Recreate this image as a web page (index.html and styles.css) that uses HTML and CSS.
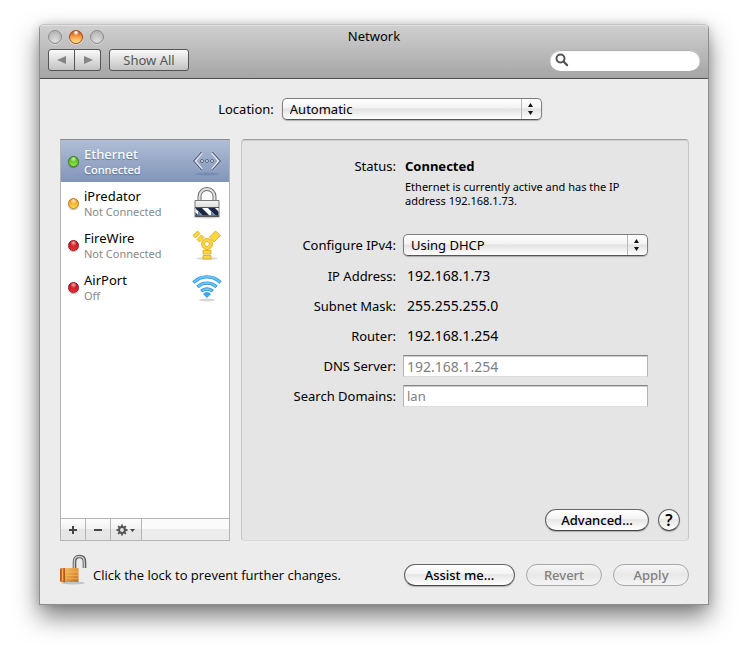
FILE: index.html
```html
<!DOCTYPE html>
<html lang="en">
<head>
<meta charset="utf-8">
<title>Network</title>
<link rel="stylesheet" href="styles.css">
</head>
<body>
<main class="window">
  <header class="titlebar">
    <div class="title-row">
      <div class="lights">
        <button class="light" aria-label="Close"></button>
        <button class="light light-amber" aria-label="Minimize"></button>
        <button class="light" aria-label="Zoom"></button>
      </div>
      <h1 class="title">Network</h1>
    </div>
    <div class="tool-row">
      <div class="nav">
        <button class="nav-btn" aria-label="Back"><svg width="10" height="10" viewBox="0 0 10 10"><path d="M9 1v8L0 5z" fill="#858585"/></svg></button>
        <button class="nav-btn" aria-label="Forward"><svg width="10" height="10" viewBox="0 0 10 10"><path d="M1 1v8l9-4z" fill="#858585"/></svg></button>
      </div>
      <button class="show-all">Show All</button>
      <div class="search">
        <svg width="14" height="14" viewBox="0 0 14 14"><circle cx="5.5" cy="5.5" r="4" fill="none" stroke="#555" stroke-width="2"/><path d="M8.500 8.500l3.600 3.600" stroke="#555" stroke-width="2.200" stroke-linecap="round"/></svg>
        <input type="search" aria-label="Search">
      </div>
    </div>
  </header>

  <div class="content">
    <div class="location">
      <label for="location">Location:</label>
      <span class="popup popup-location">
        <select id="location"><option>Automatic</option></select>
        <svg class="arrows" width="20" height="20" viewBox="0 0 20 20"><path d="M.5 0v20" stroke="#bbb"/><path d="M7 8l2.500-4L12 8zM7 12h5l-2.500 4z" fill="#111"/></svg>
      </span>
    </div>

    <div class="columns">
      <section class="sidebar">
        <ul class="services">
          <li class="service selected">
            <span class="dot green"></span>
            <span class="names"><span class="name">Ethernet</span><span class="state">Connected</span></span>
            <svg class="icon" width="32" height="32" viewBox="0 0 32 32">
              <ellipse cx="16" cy="29" rx="12" ry="1.500" fill="#63779f" opacity=".45"/>
              <g fill="none" stroke="#e5eaf2" stroke-width="3"><path d="M10.500 7.500L3.500 16l7 8.500M21.500 7.500l7 8.500-7 8.500"/></g>
              <g fill="none" stroke="#56647d" stroke-width="1.300"><path d="M10.500 7L2.500 16l8 9M21.500 7l8 9-8 9"/></g>
              <g fill="#dce3ee" stroke="#56647d"><circle cx="11" cy="16" r="1.500"/><circle cx="16" cy="16" r="1.500"/><circle cx="21" cy="16" r="1.500"/></g>
            </svg>
          </li>
          <li class="service">
            <span class="dot amber"></span>
            <span class="names"><span class="name">iPredator</span><span class="state">Not Connected</span></span>
            <svg class="icon" width="32" height="32" viewBox="0 0 32 32">
              <defs>
                <linearGradient id="steel" x2="0" y2="1"><stop offset="0" stop-color="#f5f5f5"/><stop offset="1" stop-color="#bbb"/></linearGradient>
                <clipPath id="band"><path d="M4.500 20.500h23v8h-23z"/></clipPath>
              </defs>
              <ellipse cx="16" cy="30" rx="14" ry="1.500" fill="#888" opacity=".4"/>
              <path d="M8.500 14V9.500a7.500 7.500 0 0 1 15 0V14" fill="none" stroke="#707070" stroke-width="4"/>
              <path d="M8.500 14V9.500a7.500 7.500 0 0 1 15 0V14" fill="none" stroke="#e0e0e0" stroke-width="2"/>
              <path d="M4 13.500h24v16H4z" fill="url(#steel)" stroke="#777"/>
              <g clip-path="url(#band)"><path d="M4 20h24v9H4z" fill="#fff"/><path d="M3 20h7l9 9h-7zM16 20h7l9 9h-7zM-8 20h7l9 9H1z" fill="#1b2744"/><path d="M7 24l4 5H7zM20 24l4 5h-4z" fill="#5c7fc4"/></g>
              <path d="M4 20.500h24" stroke="#555"/><path d="M4 29h24" stroke="#333"/>
            </svg>
          </li>
          <li class="service">
            <span class="dot red"></span>
            <span class="names"><span class="name">FireWire</span><span class="state">Not Connected</span></span>
            <svg class="icon" width="32" height="32" viewBox="0 0 32 32">
              <ellipse cx="16" cy="29.500" rx="11" ry="1.500" fill="#999" opacity=".35"/>
              <g fill="#fbd93c" stroke="#d9a514" stroke-width=".8">
                <path d="M18.500 8l6-6 5 4.500-6.500 6.500zM2 6.500L6.500 2l2.500 2.500L4.500 9zM6 10.500L10.500 6l2.500 2.500L8.500 13zM12 21.500h8v3.500h-8zM12 26.500h8V30h-8z"/>
                <path fill-rule="evenodd" d="M16 9.500a5.500 5.500 0 1 0 0 11 5.500 5.500 0 0 0 0-11zm0 3a2.500 2.500 0 1 1 0 5 2.500 2.500 0 0 1 0-5z"/>
              </g>
            </svg>
          </li>
          <li class="service">
            <span class="dot red"></span>
            <span class="names"><span class="name">AirPort</span><span class="state">Off</span></span>
            <svg class="icon" width="32" height="32" viewBox="0 0 32 32">
              <ellipse cx="16" cy="29" rx="8" ry="1.500" fill="#999" opacity=".4"/>
              <g fill="none" stroke="#2790d8" stroke-width="3.400"><path d="M2.500 11.500a19 19 0 0 1 27 0M6.500 16a13.500 13.500 0 0 1 19 0M10.300 20.300a8.300 8.300 0 0 1 11.400 0"/></g>
              <g fill="none" stroke="#67c4fa" stroke-width="2"><path d="M3 11.200a18.500 18.500 0 0 1 26 0M7 15.700a13 13 0 0 1 18 0M11 20a7.500 7.500 0 0 1 10 0"/></g>
              <path d="M12.500 23a5 5 0 0 1 7 0L16 26.500z" fill="#41a9ea" stroke="#2790d8" stroke-width=".8"/>
            </svg>
          </li>
        </ul>
        <div class="list-tools">
          <button class="tool" aria-label="Add"><svg width="10" height="10" viewBox="0 0 10 10"><path d="M5 1v8M1 5h8" stroke="#444" stroke-width="2"/></svg></button>
          <button class="tool" aria-label="Remove"><svg width="10" height="10" viewBox="0 0 10 10"><path d="M1 5h8" stroke="#444" stroke-width="2"/></svg></button>
          <button class="tool tool-wide" aria-label="Actions"><svg width="20" height="12" viewBox="0 0 20 12"><circle cx="6" cy="6" r="2.900" fill="none" stroke="#555" stroke-width="2"/><g stroke="#555" stroke-width="1.800"><path d="M6 .5v2.500M6 9v2.500M.5 6H3M9 6h2.500M2.100 2.100l1.800 1.800M8.100 8.100l1.800 1.800M2.100 9.900l1.800-1.800M8.100 3.900l1.800-1.800"/></g><path d="M14 5h5l-2.500 3z" fill="#444"/></svg></button>
        </div>
      </section>

      <section class="panel">
        <div class="form">
          <span class="label">Status:</span>
          <div class="status"><strong>Connected</strong><p>Ethernet is currently active and has the IP<br>address 192.168.1.73.</p></div>
          <label class="label" for="ipv4">Configure IPv4:</label>
          <span class="popup"><select id="ipv4"><option>Using DHCP</option></select><svg class="arrows" width="20" height="20" viewBox="0 0 20 20"><path d="M.5 0v20" stroke="#bbb"/><path d="M7 8l2.500-4L12 8zM7 12h5l-2.500 4z" fill="#111"/></svg></span>
          <span class="label">IP Address:</span><span class="value">192.168.1.73</span>
          <span class="label">Subnet Mask:</span><span class="value">255.255.255.0</span>
          <span class="label">Router:</span><span class="value">192.168.1.254</span>
          <label class="label" for="dns">DNS Server:</label><input class="field field-ip" id="dns" type="text" placeholder="192.168.1.254">
          <label class="label" for="domains">Search Domains:</label><input class="field" id="domains" type="text" placeholder="lan">
        </div>
        <div class="panel-actions">
          <button class="pill">Advanced...</button>
          <button class="help" aria-label="Help">?</button>
        </div>
      </section>
    </div>

    <footer class="footer">
      <button class="lock">
        <svg width="28" height="32" viewBox="0 0 28 32">
          <defs><linearGradient id="brass" x2="1" y2="1"><stop offset="0" stop-color="#f3bd68"/><stop offset=".5" stop-color="#e39a3c"/><stop offset="1" stop-color="#c66c1c"/></linearGradient></defs>
          <ellipse cx="13" cy="29" rx="12" ry="1.500" fill="#777" opacity=".35"/>
          <path d="M14.500 14V8q0-5.500 5-5.500t5 5.500v6" fill="none" stroke="#5d5d5d" stroke-width="3.600"/>
          <path d="M14.300 14V8q0-5.500 5-5.500t5 5.500v6" fill="none" stroke="#c9c9c9" stroke-width="1.400"/>
          <path d="M5 14h13.500v14H5z" fill="url(#brass)"/>
          <path d="M0 14.500l5-.5v14.500l-5-1z" fill="#b9591b"/>
          <path d="M2.500 14.500v13" stroke="#f0b060" stroke-width="1.500"/>
          <path d="M6 18h12M6 21.500h12M6 24.500h12" stroke="#f6c872" opacity=".45"/>
        </svg>
        <span>Click the lock to prevent further changes.</span>
      </button>
      <div class="actions">
        <button class="pill pill-wide">Assist me...</button>
        <button class="pill pill-small" disabled>Revert</button>
        <button class="pill pill-small" disabled>Apply</button>
      </div>
    </footer>
  </div>
</main>
</body>
</html>
```
FILE: styles.css
```css
* { box-sizing: border-box; }
body {
  margin: 0;
  padding: 24px 39px 54px;
  background: #fff;
  color: #000;
  font: 13px/16px "Noto Sans", "Open Sans", sans-serif;
}
button, input, select { font: inherit; color: inherit; margin: 0; }
button { padding: 0; }
svg { display: block; flex: none; }

.window {
  background: #ececec;
  border: 1px solid #8e8e8e;
  border-top-color: #c5c5c5;
  border-radius: 5px 5px 0 0;
  box-shadow: 0 12px 24px rgba(0, 0, 0, .5), 0 0 10px rgba(0, 0, 0, .15);
}
.titlebar {
  padding: 0 8px 7px;
  background: linear-gradient(#d0d0d0, #a5a5a5);
  border-bottom: 1px solid #515151;
  border-radius: 4px 4px 0 0;
  box-shadow: inset 0 1px #e0e0e0;
}
.title-row { display: grid; grid-template-columns: 1fr auto 1fr; height: 24px; align-items: center; }
.lights { display: flex; gap: 7px; }
.light {
  width: 14px;
  height: 14px;
  border: 1px solid #8a8a8a;
  border-radius: 50%;
  background: radial-gradient(circle at 50% 80%, #dedede, #b8b8b8 75%);
  box-shadow: 0 1px #ddd;
}
.light-amber {
  border-color: #a34716;
  background: radial-gradient(circle at 50% 12%, #fff4e0 0 8%, transparent 25%), linear-gradient(#b63b17, #f3933d 40%, #ffe98b);
}
.title { margin: 0; font-size: 13px; line-height: 16px; font-weight: 400; padding-bottom: 2px; }
.tool-row { display: flex; align-items: center; }
.nav { display: flex; }
.nav-btn, .show-all {
  height: 22px;
  border: 1px solid #555;
  background: linear-gradient(#fafafa, #c2c2c2);
  color: #555;
}
.nav-btn { width: 27px; display: grid; place-items: center; border-radius: 3px 0 0 3px; }
.nav-btn + .nav-btn { border-left: 0; width: 26px; border-radius: 0 3px 3px 0; }
.show-all { width: 80px; margin-left: 8px; border-radius: 3px; }
.search {
  display: flex;
  align-items: center;
  width: 150px;
  height: 21px;
  margin-left: auto;
  padding-left: 5px;
  border-radius: 11px;
  background: #fff;
  box-shadow: inset 0 1px 1px #aaa;
}
.search input { flex: 1; min-width: 0; border: 0; background: none; outline: 0; }

.content { padding: 19px 19px 18px 20px; }
.location { display: flex; justify-content: center; align-items: center; gap: 8px; padding-left: 11px; }
.popup { position: relative; display: block; }
.popup-location { width: 260px; }
.popup select {
  display: block;
  width: 100%;
  height: 22px;
  padding: 0 24px 0 7px;
  appearance: none;
  border: 1px solid #7d7d7d;
  border-bottom-color: #555;
  border-radius: 5px;
  background: linear-gradient(#fff, #f3f3f3 45%, #e2e2e2 50%, #fff);
  box-shadow: 0 1px 1px rgba(0, 0, 0, .25);
}
.arrows { position: absolute; right: 1px; top: 1px; pointer-events: none; }

.columns { display: grid; grid-template-columns: 170px minmax(0, 1fr); gap: 11px; margin-top: 19px; }
.sidebar { display: flex; flex-direction: column; border: 1px solid #b4b4b4; border-top-color: #8c8c8c; background: #fff; }
.services { flex: 1; margin: 0; padding: 0; list-style: none; }
.service { display: flex; align-items: center; height: 42px; padding: 0 6px 0 7px; }
.selected { color: #fff; background: linear-gradient(#b0bdd6, #8095b9); text-shadow: 0 1px 1px #5d7094; }
.dot { width: 11px; height: 11px; margin-right: 5px; border-radius: 50%; border: 1px solid; box-shadow: 0 1px 1px rgba(0, 0, 0, .3); }
.green { border-color: #377c14; background: radial-gradient(circle at 50% 20%, #d5f7b8, transparent 40%), linear-gradient(#3c9b17, #91ee42); }
.amber { border-color: #c27a16; background: radial-gradient(circle at 50% 20%, #ffebbd, transparent 40%), linear-gradient(#e58a15, #ffdc4b); }
.red { border-color: #8f1119; background: radial-gradient(circle at 50% 20%, #f5b1b1, transparent 40%), linear-gradient(#b50e1b, #ef3034); }
.names { display: flex; flex: 1; flex-direction: column; }
.name { line-height: 16px; }
.state { font-size: 11px; line-height: 15px; color: #888; }
.selected .name { font-weight: 500; }
.selected .state { color: #fff; font-weight: 500; }
.list-tools { display: flex; height: 22px; border-top: 1px solid #b4b4b4; background: linear-gradient(#fbfbfb 48%, #ececec 50%); }
.tool { display: grid; place-items: center; width: 25px; border: 0; border-right: 1px solid #b4b4b4; background: linear-gradient(#fdfdfd, #f2f2f2 48%, #e6e6e6 50%); }
.tool-wide { width: 31px; }

.panel {
  display: flex;
  flex-direction: column;
  justify-content: space-between;
  gap: 98px;
  padding: 18px 8px 9px 0;
  border: 1px solid #c6c6c6;
  border-top-color: #a0a0a0;
  border-bottom-color: #d8d8d8;
  border-radius: 4px;
  background: #e5e5e5;
  box-shadow: inset 0 1px #cfcfcf;
}
.form {
  display: grid;
  grid-template-columns: 154px minmax(0, 1fr);
  grid-template-rows: 71px 32px repeat(5, 30px);
  column-gap: 7px;
  align-items: center;
  padding-right: 32px;
}
.label { text-align: right; }
.form > .label:first-child, .status { align-self: start; }
.status { padding-left: 2px; }
.status p { margin: 6px 0 0; font-size: 11px; line-height: 14px; white-space: nowrap; }
.value { padding-left: 4px; font-size: 14px; }
.field { width: 100%; height: 22px; padding: 0 3px; border: 1px solid #b5b5b5; border-top-color: #858585; border-bottom-color: #ddd; background: #fff; box-shadow: inset 0 1px #ccc; }
.field::placeholder { color: #808080; opacity: 1; }
.field-ip { font-size: 14px; }
.panel-actions { display: flex; justify-content: flex-end; align-items: center; gap: 9px; }
.pill, .help {
  height: 22px;
  border: 1px solid #666;
  border-bottom-color: #444;
  border-radius: 11px;
  background: linear-gradient(#fff, #f5f5f5 42%, #e6e6e6 48%, #fff);
  box-shadow: 0 1px 1px rgba(0, 0, 0, .25);
}
.pill { width: 104px; font-weight: 500; }
.pill-wide { width: 111px; }
.pill-small { width: 76px; }
.pill:disabled { color: #808080; border-color: #a8a8a8; background: linear-gradient(#f6f6f6, #e8e8e8 48%, #f5f5f5); box-shadow: none; }
.help { width: 22px; font-size: 16px; font-weight: 600; line-height: 20px; }

.footer { display: flex; justify-content: space-between; align-items: flex-end; margin-top: 12px; }
.lock { display: flex; align-items: center; gap: 5px; height: 33px; border: 0; background: none; font-family: "Open Sans", sans-serif; }
.lock span { padding-top: 10px; }
.actions { display: flex; gap: 11px; }
```
